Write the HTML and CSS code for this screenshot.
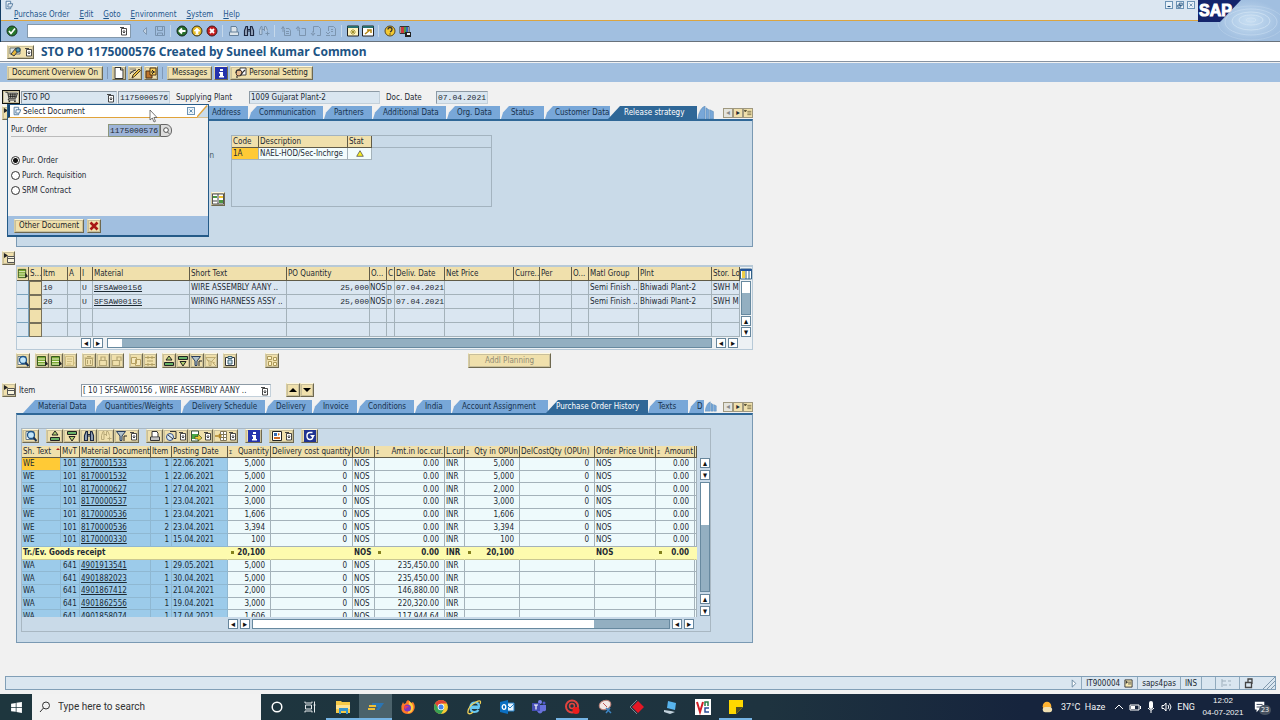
FILE: index.html
```html
<!DOCTYPE html>
<html lang="en">
<head>
<meta charset="utf-8">
<title>STO PO 1175000576 Created by Suneel Kumar Common</title>
<link rel="stylesheet" href="styles.css">
</head>
<body>
<svg class="defs" aria-hidden="true">
<symbol id="exit" viewBox="0 0 12 12"><path d="M8 4.500V1.500H2.500v9H8V9M5 4.500h5.500L9 8.500H4.500z" fill="#eef4fa" stroke="#456f96"/></symbol>
<symbol id="hist" viewBox="0 0 8 10"><path d="M1.500 2.500h5v6.500h-5z" fill="#fff" stroke="#333" stroke-width=".9"/><path d="M0 1.500h4M4 4v3M2.800 5.500L4 7l1.200-1.500" fill="none" stroke="#333" stroke-width=".9"/></symbol>
<symbol id="ok" viewBox="0 0 12 12"><circle cx="6" cy="6" r="5" fill="#26762c" stroke="#1c3623"/><path d="M3 6l2 2.500 4-5" fill="none" stroke="#fff" stroke-width="1.700"/></symbol>
<symbol id="back" viewBox="0 0 12 12"><circle cx="6" cy="6" r="5" fill="#27702c" stroke="#13251a"/><path d="M9.500 6H4M6 3.500L3.500 6 6 8.500" fill="none" stroke="#fff" stroke-width="1.900"/></symbol>
<symbol id="up" viewBox="0 0 12 12"><circle cx="6" cy="6" r="5" fill="#e7bd27" stroke="#39341c"/><path d="M3 6l3-3 3 3H7v2.500H5V6zM4 9.500h4" fill="#fff" stroke="#fff" stroke-width=".7"/></symbol>
<symbol id="cancel" viewBox="0 0 12 12"><circle cx="6" cy="6" r="5" fill="#c51e1e" stroke="#46191a"/><path d="M4 4l4 4M8 4L4 8" stroke="#fff" stroke-width="1.800"/></symbol>
<symbol id="save" viewBox="0 0 12 12"><path d="M1.500 1.500h9v9h-9zM3.500 1.500v4h5v-4M3.500 10.500V8h5v2.500" fill="none" stroke="#7893af"/></symbol>
<symbol id="tri" viewBox="0 0 12 12"><path d="M7.500 2.500L4 6l3.500 3.500z" fill="#c1d1e1" stroke="#8199b3"/></symbol>
<symbol id="print" viewBox="0 0 12 12"><path d="M3 7V1.500h5l1 2V7M1.500 7h9v3.500h-9z" fill="#dce4ea" stroke="#65809b"/></symbol>
<symbol id="print2" viewBox="0 0 12 12"><path d="M3 7V1.500h5l1 2V7M1.500 7h9v3.500h-9z" fill="#fff" stroke="#333"/><path d="M2 9h8" stroke="#888"/></symbol>
<symbol id="find" viewBox="0 0 12 12"><path d="M1.500 10.500v-5L3 1.500h1.500v9zM7.500 10.500v-9H9l1.500 4v5zM4.500 4.500h3M4.500 6h3" fill="#9cacc2" stroke="#1c2740" stroke-width="1.200"/></symbol>
<symbol id="findg" viewBox="0 0 12 12"><path d="M1.500 9.500v-4L3 1.500h1v8zM6.500 6V1.500H8l1.500 4M4 4.500h2.500M7.500 8.500h4M9.500 6.500v4" fill="none" stroke="#b9aa79"/></symbol>
<symbol id="findb" viewBox="0 0 12 12"><path d="M1.500 9.500v-4L3 1.500h1v8zM6.500 6V1.500H8l1.500 4M4 4.500h2.500M7.500 8.500h4M9.500 6.500v4" fill="#b9cce0" stroke="#7892ad"/></symbol>
<symbol id="pg1" viewBox="0 0 12 12"><path d="M4.500 4.500v6h6v-5L9 3.500H6M1.500 4L3 1.500 4.500 4M3 2v5M6 6.500h3M6 8.500h3" fill="none" stroke="#7890a9" stroke-width=".9"/></symbol>
<symbol id="pg2" viewBox="0 0 12 12"><path d="M4.500 4.500v6h6v-7h-4M1 4l2-2.500L5 4M3 2v4" fill="none" stroke="#7890a9" stroke-width=".9"/></symbol>
<symbol id="pg3" viewBox="0 0 12 12"><path d="M3.500 7V1.500h5l2 2v7H7M1 8l2 2.500L5 8M3 10V6" fill="none" stroke="#7890a9" stroke-width=".9"/></symbol>
<symbol id="pg4" viewBox="0 0 12 12"><path d="M3.500 6V1.500h5l2 2v7H6M1 7l2 2 2-2M1 10.500h4M6 4.500h2M6 6.500h2" fill="none" stroke="#7890a9" stroke-width=".9"/></symbol>
<symbol id="win" viewBox="0 0 12 12"><path d="M.5 1h11v10H.5z" fill="#fff4c0" stroke="#222"/><path d="M.5 2h11" stroke="#277071" stroke-width="2"/><path d="M6 4v6M3 7h6M4 5l4 4M8 5L4 9" stroke="#958622" stroke-width=".8"/></symbol>
<symbol id="link" viewBox="0 0 12 12"><path d="M.5 1h11v10H.5z" fill="#fff" stroke="#222"/><path d="M.5 2h11" stroke="#277071" stroke-width="2"/><path d="M3 9l5-4M5 5h4v3" fill="none" stroke="#b58713" stroke-width="1.500"/></symbol>
<symbol id="help" viewBox="0 0 12 12"><circle cx="6" cy="6" r="5" fill="#f4c932" stroke="#594820"/><path d="M4 4.500q0-2 2-2t2 2q0 1.500-2 2.500M6 8.500v1" fill="none" stroke="#313131" stroke-width="1.300"/></symbol>
<symbol id="layout" viewBox="0 0 12 12"><path d="M1 1.500h9v7H1z" fill="#fff" stroke="#333"/><path d="M2 2h3v6H2z" fill="#cb383d"/><path d="M5 2h2v6H5z" fill="#4b9d43"/><path d="M7 2h2v6H7z" fill="#3368be"/><path d="M6 7h6v5H6z" fill="#222"/><path d="M8 8h3v2H8z" fill="#eee"/></symbol>
<symbol id="dis" viewBox="0 0 12 12"><path d="M1 2h10v6H1z" fill="#dbe5e9" stroke="#6a7475"/><path d="M2 8l5-6 3 2-5 6z" fill="#e6b83a" stroke="#373b42"/><circle cx="9" cy="4" r="2.200" fill="#4a94ad" stroke="#263e51"/></symbol>
<symbol id="new" viewBox="0 0 12 12"><path d="M2 .5h6l2 2v9H2zM7.500 1v2H10" fill="#fff" stroke="#333"/></symbol>
<symbol id="edit" viewBox="0 0 12 12"><path d="M1 2h6M1 5h4" stroke="#777"/><path d="M3 11l1-3 6-6 1.500 1.500-6 6z" fill="#edc442" stroke="#46361f"/><path d="M1 7q2-4 6-4" fill="none" stroke="#333"/></symbol>
<symbol id="copy" viewBox="0 0 12 12"><path d="M1 4h6v7H1z" fill="#bd732c" stroke="#4d3217"/><path d="M5 1h6v7H5z" fill="#ffd35c" stroke="#4d3217"/><path d="M6 5h4M7 3l2 2-2 2" fill="none" stroke="#222"/></symbol>
<symbol id="info" viewBox="0 0 12 12"><path d="M0 0h12v12H0z" fill="#2433ad"/><path d="M5 2h3v2H5zM4 5h4v4h1v1.500H4V9h1V6.500H4z" fill="#fff"/></symbol>
<symbol id="person" viewBox="0 0 12 12"><path d="M5 1h6v7H5z" fill="#fff" stroke="#444"/><circle cx="4" cy="6" r="3" fill="#e8ba8c" stroke="#4c342c"/><path d="M1 6q0-4 4-3M2 9v2M5 9l3-4 2-2" fill="none" stroke="#333" stroke-width="1.200"/></symbol>
<symbol id="cart" viewBox="0 0 16 14"><path d="M1 1.500h2.500l1.500 7h8l2-6H4M4 4.500h10M5 6.500h8M7 3v5M9.500 3v5M12 3v5M5 8.500l-1 2h9" fill="none" stroke="#1b1b1b"/><circle cx="5.500" cy="12" r="1" fill="#222"/><circle cx="12" cy="12" r="1" fill="#222"/></symbol>
<symbol id="open" viewBox="0 0 12 12"><path d="M4.500 4.500v6h7v-6zM4.500 6.500h7" fill="#f9f5dd" stroke="#555"/><path d="M1 1l4 2.500L1 6z" fill="#222"/></symbol>
<symbol id="x" viewBox="0 0 12 12"><path d="M2.500 2.500l7 7M9.500 2.500l-7 7" stroke="#a81717" stroke-width="2.600"/></symbol>
<symbol id="grid" viewBox="0 0 12 12"><path d="M.5 1h11v10H.5z" fill="#fff" stroke="#555"/><path d="M1 3h4v2H1zM7 7h4v3H7z" fill="#4c9644"/><path d="M7 3h4v2H7z" fill="#edc02c"/><path d="M1 8h4M6 1v10" stroke="#444"/></symbol>
<symbol id="det" viewBox="0 0 12 12"><path d="M1 1.500h8v8H1z" fill="#fff" stroke="#697c87"/><circle cx="6" cy="5" r="3.500" fill="#c2e6fa" stroke="#1d5489" stroke-width="1.300"/><path d="M8.500 7.500l3 3.500" stroke="#1b3252" stroke-width="2"/></symbol>
<symbol id="sel" viewBox="0 0 12 12"><path d="M1.500 1.500h8v9h-8z" fill="#7aa832" stroke="#3a5b20"/><path d="M2 4h7M2 6.500h7M2 9h7" stroke="#edf5cf"/><path d="M9 5v6l3-2z" fill="#222"/></symbol>
<symbol id="dsel" viewBox="0 0 12 12"><path d="M1.500 1.500h8v9h-8zM3 4h5M3 6.500h5M3 9h4M9 8h3" fill="none" stroke="#cfbd80"/></symbol>
<symbol id="trash" viewBox="0 0 12 12"><path d="M2.500 3.500h7v7h-7zM1.500 3h9M4 1.500h4M4.500 5v4M7.500 5v4" fill="none" stroke="#b4a46f"/></symbol>
<symbol id="lock" viewBox="0 0 12 12"><path d="M2.500 5.500h7v5h-7zM4 5V2h4v3" fill="none" stroke="#b5a674" stroke-width="1.200"/></symbol>
<symbol id="unlock" viewBox="0 0 12 12"><path d="M1.500 5.500h7v5h-7zM6 5V2h4v4" fill="none" stroke="#b5a674" stroke-width="1.200"/></symbol>
<symbol id="cp2" viewBox="0 0 12 12"><path d="M1.500 2.500h5v6h-5zM5.500 4.500h5v6h-5z" fill="#f5e8bd" stroke="#b7a163"/></symbol>
<symbol id="rows" viewBox="0 0 12 12"><path d="M1 2.500h10M1 9.500h10M3 6h6M4 1v3M8 1v3M4 8v3M8 8v3" fill="none" stroke="#b19f64"/></symbol>
<symbol id="asc" viewBox="0 0 12 12"><path d="M6 1L3 5h6z" fill="#b1d272" stroke="#222"/><path d="M1.500 7.500h9v3h-9z" fill="#67b267" stroke="#222"/></symbol>
<symbol id="desc" viewBox="0 0 12 12"><path d="M1.500 1.500h9v3h-9z" fill="#67b267" stroke="#222"/><path d="M3 6.500h6L6 11z" fill="#b1d272" stroke="#222"/></symbol>
<symbol id="filter" viewBox="0 0 12 12"><path d="M.500 1.500h9L6 6v4.500H4V6z" fill="#afc0c9" stroke="#293d5c"/><path d="M8 6h3M8 6v5" stroke="#222"/></symbol>
<symbol id="filterg" viewBox="0 0 12 12"><path d="M.500 2.500h10L6 7v3.500H4V7zM8 8l3 3M2 5l8 3" fill="#e7dcb0" stroke="#bfac73"/></symbol>
<symbol id="clip" viewBox="0 0 12 12"><path d="M1.500 2.500h9v8h-9z" fill="#fff" stroke="#333"/><path d="M4 1.500h4v2H4zM4 5h4v4H4z" fill="#cce0ed" stroke="#3d6071"/></symbol>
<symbol id="cfg" viewBox="0 0 12 12"><path d="M1.500 1.500h4v3h-4zM7.500 2.500h3v3h-3zM2.500 6.500h3v4h-3zM7.500 7.500h3v3h-3z" fill="#fff4c8" stroke="#ad995a"/></symbol>
<symbol id="export" viewBox="0 0 12 12"><path d="M1.500 1h7v10h-7z" fill="#fff" stroke="#39543c"/><path d="M2 4h7v5H2z" fill="#49a745"/><path d="M5 6.500h3V4l4 4-4 3V9H5z" fill="#edcd38" stroke="#243d1e" stroke-width=".6"/></symbol>
<symbol id="view" viewBox="0 0 12 12"><circle cx="5" cy="7" r="3.500" fill="#dcecf8" stroke="#344e84"/><path d="M5 1.500h6v7H9M3 5l5 4" fill="none" stroke="#333"/></symbol>
<symbol id="cols" viewBox="0 0 12 12"><path d="M5.500 1.500h6v9h-6zM5.500 4.500h6M5.500 7.500h6M8.500 1.500v9" fill="#fff" stroke="#81785a"/><path d="M0 6h6M4 4l2 2-2 2" fill="none" stroke="#ae8428" stroke-width="1.400"/></symbol>
<symbol id="chart" viewBox="0 0 12 12"><path d="M1.500 1.500h9v9h-9z" fill="#fff" stroke="#222"/><path d="M3 3h3v3H3z" fill="#346ab6"/><path d="M7 3l2 1-2 2zM3 7h6v2H3z" fill="#cf6b28"/></symbol>
<symbol id="refresh" viewBox="0 0 12 12"><path d="M0 0h12v12H0z" fill="#203291"/><path d="M8.500 2.500H6Q3 2.500 3 6t3 3.500 3-3.500" fill="none" stroke="#fff" stroke-width="1.400"/><path d="M6 5h5L8.500 8z" fill="#fff"/></symbol>
<symbol id="tlist" viewBox="0 0 12 12"><path d="M5 3.500h6M5 6h6M5 8.500h6M0 2h4L2 4.500z" fill="#333" stroke="#5c532c"/></symbol>
<symbol id="entry" viewBox="0 0 10 10"><path d="M1 1h8v8H1z" fill="#f6e9b2" stroke="#333"/><path d="M4.500 3.500H8M4.500 5.500H8M2 2l2 1.500L2 5" stroke="#333" fill="#333" stroke-width=".8"/></symbol>
<symbol id="tstack" viewBox="0 0 18 14"><path d="M0 14Q2 2 8 0v14zM9 2l3 2v10H9zM13 4l4 2v8h-4z" fill="#78a7d8" stroke="#4a7fae" stroke-width=".5"/></symbol>
<symbol id="colcfg" viewBox="0 0 12 12"><path d="M.5 1h11v10H.5z" fill="#fff" stroke="#326085"/><path d="M.5 2h11" stroke="#24549a" stroke-width="2"/><path d="M2 3h3v7H2z" fill="#edce48"/><path d="M6 3v8M9 3v8" stroke="#326085"/></symbol>
</svg>

<header class="top">
  <div class="titlebar"><svg class="ic"><use href="#exit"/></svg></div>
  <nav class="menu"><a href="#"><u>P</u>urchase Order</a><a href="#"><u>E</u>dit</a><a href="#"><u>G</u>oto</a><a href="#"><u>E</u>nvironment</a><a href="#"><u>S</u>ystem</a><a href="#"><u>H</u>elp</a></nav>
  <div class="stdbar">
    <button class="flat" aria-label="Enter"><svg class="ic"><use href="#ok"/></svg></button>
    <span class="cmd"><input type="text" aria-label="Command"><svg class="hist"><use href="#hist"/></svg></span>
    <div class="icons i1"><button class="flat" aria-label="Collapse"><svg class="ic"><use href="#tri"/></svg></button><button class="flat" aria-label="Save"><svg class="ic"><use href="#save"/></svg></button></div>
    <div class="icons"><button class="flat" aria-label="Back"><svg class="ic"><use href="#back"/></svg></button><button class="flat" aria-label="Exit"><svg class="ic"><use href="#up"/></svg></button><button class="flat" aria-label="Cancel"><svg class="ic"><use href="#cancel"/></svg></button></div>
    <div class="icons"><button class="flat" aria-label="Print"><svg class="ic"><use href="#print"/></svg></button><button class="flat" aria-label="Find"><svg class="ic"><use href="#find"/></svg></button><button class="flat" aria-label="Find next"><svg class="ic"><use href="#findb"/></svg></button></div>
    <div class="icons"><button class="flat" aria-label="First page"><svg class="ic"><use href="#pg1"/></svg></button><button class="flat" aria-label="Previous page"><svg class="ic"><use href="#pg2"/></svg></button><button class="flat" aria-label="Next page"><svg class="ic"><use href="#pg3"/></svg></button><button class="flat" aria-label="Last page"><svg class="ic"><use href="#pg4"/></svg></button></div>
    <div class="icons"><button class="flat" aria-label="New session"><svg class="ic"><use href="#win"/></svg></button><button class="flat" aria-label="Shortcut"><svg class="ic"><use href="#link"/></svg></button></div>
    <div class="icons"><button class="flat" aria-label="Help"><svg class="ic"><use href="#help"/></svg></button><button class="flat" aria-label="Local layout"><svg class="ic"><use href="#layout"/></svg></button></div>
  </div>
  <div class="wctl"><button aria-label="Minimise"><svg viewBox="0 0 8 8"><path d="M2 6h4" stroke="#1f4b77" stroke-width="1.500"/></svg></button><button aria-label="Restore"><svg viewBox="0 0 8 8"><path d="M3 1.500h4v3H3zM1 4h4v3H1z" fill="#cfe0ee" stroke="#1f4b77"/></svg></button><button aria-label="Close"><svg viewBox="0 0 8 8"><path d="M2 2l4 4M6 2L2 6" stroke="#547da2"/></svg></button></div>
  <svg class="logo" viewBox="0 0 82 41" role="img" aria-label="SAP"><defs><radialGradient id="water"><stop offset="0" stop-color="#c8dff3"/><stop offset="1" stop-color="#a1bfe0"/></radialGradient></defs><path d="M20 22L42 0h40v41H20z" fill="url(#water)"/><g fill="none" stroke="#cfe2f3"><ellipse cx="53" cy="20" rx="5" ry="2"/><ellipse cx="53" cy="20" rx="12" ry="5"/><ellipse cx="53" cy="21" rx="19" ry="9" opacity=".8"/><ellipse cx="53" cy="22" rx="26" ry="13" opacity=".5"/><ellipse cx="53" cy="23" rx="33" ry="17" opacity=".3"/></g><path d="M0 0h43L22 22H0z" fill="#14246b"/><text x="1" y="16" class="saptext">SAP</text></svg>
</header>

<div class="heading"><button class="btn split" aria-label="Display or change"><svg class="ic"><use href="#dis"/></svg><svg class="hist"><use href="#hist"/></svg></button><h1>STO PO 1175000576 Created by Suneel Kumar Common</h1></div>

<div class="appbar">
  <button class="btn">Document Overview On</button><i class="sep"></i>
  <button class="btn sq" aria-label="Create"><svg class="ic"><use href="#new"/></svg></button><button class="btn sq" aria-label="Change"><svg class="ic"><use href="#edit"/></svg></button><button class="btn sq" aria-label="Other document"><svg class="ic"><use href="#copy"/></svg></button><i class="sep"></i>
  <button class="btn">Messages</button><button class="btn sq" aria-label="Help"><svg class="ic"><use href="#info"/></svg></button><button class="btn"><svg class="ic"><use href="#person"/></svg>Personal Setting</button>
</div>

<main>
  <form class="docrow">
    <button type="button" class="btn cart" aria-label="Cart"><svg><use href="#cart"/></svg></button>
    <span class="pick type"><select aria-label="Document type"><option>STO PO</option></select><svg class="hist"><use href="#hist"/></svg></span>
    <input class="mono num" type="text" value="1175000576" aria-label="Document number">
    <label for="plant">Supplying Plant</label><input id="plant" class="plant" type="text" value="1009 Gujarat Plant-2">
    <label for="date">Doc. Date</label><input id="date" class="mono date" type="text" value="07.04.2021">
  </form>

  <section class="sect head">
    <button class="btn sq" aria-label="Collapse header"><svg class="ic"><use href="#open"/></svg></button>
    <div class="pane">
      <div class="tabs t1"><button>Texts</button><button>Address</button><button>Communication</button><button>Partners</button><button>Additional Data</button><button>Org. Data</button><button>Status</button><button>Customer Data</button><button class="on">Release strategy</button><svg class="stack"><use href="#tstack"/></svg><div class="tnav"><button aria-label="Tabs left" class="off">◂</button><button aria-label="Tabs right">▸</button><button aria-label="Tab list"><svg><use href="#tlist"/></svg></button></div></div>
      <div class="panel p1">
        <div class="rel"><span>Release Indication</span><button class="btn sq" aria-label="Release options"><svg class="ic"><use href="#grid"/></svg></button></div>
        <div class="relbox"><div class="relhead"></div><table class="reltab"><colgroup><col class="c27"><col class="c89"><col class="c24"></colgroup><tr><th>Code</th><th>Description</th><th>Stat</th></tr><tr><td class="hot">1A</td><td>NAEL-HOD/Sec-Inchrge</td><td class="mid"><svg class="warn" viewBox="0 0 8 7"><path d="M4 .7L7.300 6.300H.7z" fill="#f8ee20" stroke="#555" stroke-width=".8"/></svg></td></tr></table></div>
      </div>
    </div>
  </section>

  <section class="sect items">
    <button class="btn sq" aria-label="Collapse items"><svg class="ic"><use href="#open"/></svg></button>
    <div class="pane itempane">
      <div class="itembox">
        <table class="itab"><colgroup><col class="c12"><col class="c13"><col class="c26"><col class="c13"><col class="c12"><col class="c97"><col class="c97"><col class="c83"><col class="c17"><col class="c8"><col class="c50"><col class="c69"><col class="c26"><col class="c32"><col class="c17"><col class="c50"><col class="c73"><col class="c28"></colgroup>
        <thead><tr><th class="selh"><svg class="ic"><use href="#sel"/></svg></th><th>S...</th><th>Itm</th><th>A</th><th>I</th><th>Material</th><th>Short Text</th><th>PO Quantity</th><th>O...</th><th>C</th><th>Deliv. Date</th><th>Net Price</th><th>Curre...</th><th>Per</th><th>O...</th><th>Matl Group</th><th>Plnt</th><th>Stor. Lo</th></tr></thead>
        <tbody>
        <tr><td></td><td class="rs"></td><td class="mono">10</td><td></td><td class="mono">U</td><td class="mono"><a href="#">SFSAW00156</a></td><td>WIRE ASSEMBLY AANY ..</td><td class="mono r">25,000</td><td>NOS</td><td class="mono">D</td><td class="mono">07.04.2021</td><td></td><td></td><td></td><td></td><td>Semi Finish ..</td><td>Bhiwadi Plant-2</td><td>SWH M</td></tr>
        <tr><td></td><td class="rs"></td><td class="mono">20</td><td></td><td class="mono">U</td><td class="mono"><a href="#">SFSAW00155</a></td><td>WIRING HARNESS ASSY ..</td><td class="mono r">25,000</td><td>NOS</td><td class="mono">D</td><td class="mono">07.04.2021</td><td></td><td></td><td></td><td></td><td>Semi Finish ..</td><td>Bhiwadi Plant-2</td><td>SWH M</td></tr>
        <tr><td></td><td class="rs"></td><td></td><td></td><td></td><td></td><td></td><td></td><td></td><td></td><td></td><td></td><td></td><td></td><td></td><td></td><td></td><td></td></tr>
        <tr><td></td><td class="rs"></td><td></td><td></td><td></td><td></td><td></td><td></td><td></td><td></td><td></td><td></td><td></td><td></td><td></td><td></td><td></td><td></td></tr>
        </tbody></table>
        <div class="vs"><button class="colbtn" aria-label="Configure columns"><svg class="ic"><use href="#colcfg"/></svg></button><div class="track"><i></i></div><button class="ar" aria-label="Up">▴</button><button class="ar" aria-label="Down">▾</button></div>
        <div class="hs h1"><button class="ar" aria-label="Left">◂</button><button class="ar" aria-label="Right">▸</button><div class="track"><i></i></div><button class="ar" aria-label="Left">◂</button><button class="ar" aria-label="Right">▸</button></div>
      </div>
      <div class="tools it">
        <div><button class="btn sq" aria-label="Details"><svg class="ic"><use href="#det"/></svg></button></div>
        <div><button class="btn sq" aria-label="Select all"><svg class="ic"><use href="#sel"/></svg></button><button class="btn sq" aria-label="Select block"><svg class="ic"><use href="#sel"/></svg></button><button class="btn sq" aria-label="Deselect"><svg class="ic"><use href="#dsel"/></svg></button></div>
        <div><button class="btn sq" aria-label="Delete"><svg class="ic"><use href="#trash"/></svg></button><button class="btn sq" aria-label="Lock"><svg class="ic"><use href="#lock"/></svg></button><button class="btn sq" aria-label="Unlock"><svg class="ic"><use href="#unlock"/></svg></button></div>
        <div><button class="btn sq" aria-label="Copy"><svg class="ic"><use href="#cp2"/></svg></button><button class="btn sq" aria-label="Duplicate"><svg class="ic"><use href="#rows"/></svg></button></div>
        <div><button class="btn sq" aria-label="Sort ascending"><svg class="ic"><use href="#asc"/></svg></button><button class="btn sq" aria-label="Sort descending"><svg class="ic"><use href="#desc"/></svg></button><button class="btn sq" aria-label="Filter"><svg class="ic"><use href="#filter"/></svg></button><button class="btn sq" aria-label="Clear filter"><svg class="ic"><use href="#filterg"/></svg></button></div>
        <div><button class="btn sq" aria-label="Clipboard"><svg class="ic"><use href="#clip"/></svg></button></div>
        <div class="far"><button class="btn sq" aria-label="Configuration"><svg class="ic"><use href="#cfg"/></svg></button></div>
        <button class="btn addl" disabled>Addl Planning</button>
      </div>
    </div>
  </section>

  <div class="itemrow"><button class="btn sq" aria-label="Collapse item detail"><svg class="ic"><use href="#open"/></svg></button><label for="item">Item</label><span class="pick item"><select id="item"><option>[ 10 ] SFSAW00156 , WIRE ASSEMBLY AANY ..</option></select><svg class="hist"><use href="#hist"/></svg></span><button class="btn sq" aria-label="Previous item"><svg class="ic" viewBox="0 0 12 12"><path d="M2 8h8L6 4z"/></svg></button><button class="btn sq" aria-label="Next item"><svg class="ic" viewBox="0 0 12 12"><path d="M2 4h8L6 8z"/></svg></button></div>

  <section class="pane detail">
    <div class="tabs t2"><button>Material Data</button><button>Quantities/Weights</button><button>Delivery Schedule</button><button>Delivery</button><button>Invoice</button><button>Conditions</button><button>India</button><button>Account Assignment</button><button class="on">Purchase Order History</button><button>Texts</button><button class="cutoff">D</button><svg class="stack"><use href="#tstack"/></svg><div class="tnav"><button aria-label="Tabs left" class="off">◂</button><button aria-label="Tabs right">▸</button><button aria-label="Tab list"><svg><use href="#tlist"/></svg></button></div></div>
    <div class="panel p2"><div class="alv">
      <div class="tools at">
        <div><button class="btn sq" aria-label="Details"><svg class="ic"><use href="#det"/></svg></button></div>
        <div><button class="btn sq" aria-label="Sort ascending"><svg class="ic"><use href="#asc"/></svg></button><button class="btn sq" aria-label="Sort descending"><svg class="ic"><use href="#desc"/></svg></button><button class="btn sq" aria-label="Find"><svg class="ic"><use href="#find"/></svg></button><button class="btn sq" aria-label="Find next"><svg class="ic"><use href="#findg"/></svg></button><button class="btn split" aria-label="Filter"><svg class="ic"><use href="#filter"/></svg><svg class="hist"><use href="#hist"/></svg></button></div>
        <div><button class="btn sq" aria-label="Print"><svg class="ic"><use href="#print2"/></svg></button><button class="btn split" aria-label="Views"><svg class="ic"><use href="#view"/></svg><svg class="hist"><use href="#hist"/></svg></button><button class="btn split" aria-label="Export"><svg class="ic"><use href="#export"/></svg><svg class="hist"><use href="#hist"/></svg></button><button class="btn split" aria-label="Layout"><svg class="ic"><use href="#cols"/></svg><svg class="hist"><use href="#hist"/></svg></button></div>
        <div><button class="btn sq" aria-label="Information"><svg class="ic"><use href="#info"/></svg></button></div>
        <div><button class="btn split" aria-label="Graphic"><svg class="ic"><use href="#chart"/></svg><svg class="hist"><use href="#hist"/></svg></button></div>
        <div><button class="btn sq" aria-label="Refresh"><svg class="ic"><use href="#refresh"/></svg></button></div>
      </div>
      <div class="alvbody">
        <div class="clip"><table class="hist-tab"><colgroup><col class="c39"><col class="c19"><col class="c71"><col class="c21"><col class="c56"><col class="c43"><col class="c82"><col class="c22"><col class="c70"><col class="c20"><col class="c55"><col class="c75"><col class="c61"><col class="c39"><col class="c2"></colgroup>
        <thead><tr><th>Sh. Text<svg class="sorted" viewBox="0 0 4 4"><path d="M0 3l2-2 2 2z" fill="#a22"/></svg></th><th>MvT</th><th>Material Document</th><th>Item</th><th>Posting Date</th><th><i>Σ</i>Quantity</th><th>Delivery cost quantity</th><th>OUn</th><th><i>Σ</i>Amt.in loc.cur.</th><th>L.cur</th><th><i>Σ</i>Qty in OPUn</th><th>DelCostQty (OPUn)</th><th>Order Price Unit</th><th><i>Σ</i>Amount</th><th></th></tr></thead>
        <tbody>
        <tr><td class="hot">WE</td><td>101</td><td><a href="#">8170001533</a></td><td>1</td><td>22.06.2021</td><td>5,000</td><td>0</td><td>NOS</td><td>0.00</td><td>INR</td><td>5,000</td><td>0</td><td>NOS</td><td>0.00</td><td></td></tr>
        <tr><td>WE</td><td>101</td><td><a href="#">8170001532</a></td><td>1</td><td>22.06.2021</td><td>5,000</td><td>0</td><td>NOS</td><td>0.00</td><td>INR</td><td>5,000</td><td>0</td><td>NOS</td><td>0.00</td><td></td></tr>
        <tr><td>WE</td><td>101</td><td><a href="#">8170000627</a></td><td>1</td><td>27.04.2021</td><td>2,000</td><td>0</td><td>NOS</td><td>0.00</td><td>INR</td><td>2,000</td><td>0</td><td>NOS</td><td>0.00</td><td></td></tr>
        <tr><td>WE</td><td>101</td><td><a href="#">8170000537</a></td><td>1</td><td>23.04.2021</td><td>3,000</td><td>0</td><td>NOS</td><td>0.00</td><td>INR</td><td>3,000</td><td>0</td><td>NOS</td><td>0.00</td><td></td></tr>
        <tr><td>WE</td><td>101</td><td><a href="#">8170000536</a></td><td>1</td><td>23.04.2021</td><td>1,606</td><td>0</td><td>NOS</td><td>0.00</td><td>INR</td><td>1,606</td><td>0</td><td>NOS</td><td>0.00</td><td></td></tr>
        <tr><td>WE</td><td>101</td><td><a href="#">8170000536</a></td><td>2</td><td>23.04.2021</td><td>3,394</td><td>0</td><td>NOS</td><td>0.00</td><td>INR</td><td>3,394</td><td>0</td><td>NOS</td><td>0.00</td><td></td></tr>
        <tr><td>WE</td><td>101</td><td><a href="#">8170000330</a></td><td>1</td><td>15.04.2021</td><td>100</td><td>0</td><td>NOS</td><td>0.00</td><td>INR</td><td>100</td><td>0</td><td>NOS</td><td>0.00</td><td></td></tr>
        <tr class="sum"><td colspan="5">Tr./Ev. Goods receipt</td><td class="r"><i></i>20,100</td><td></td><td>NOS</td><td class="r"><i></i>0.00</td><td>INR</td><td class="r"><i></i>20,100</td><td></td><td>NOS</td><td class="r"><i></i>0.00</td><td></td></tr>
        <tr><td>WA</td><td>641</td><td><a href="#">4901913541</a></td><td>1</td><td>29.05.2021</td><td>5,000</td><td>0</td><td>NOS</td><td>235,450.00</td><td>INR</td><td></td><td></td><td></td><td></td><td></td></tr>
        <tr><td>WA</td><td>641</td><td><a href="#">4901882023</a></td><td>1</td><td>30.04.2021</td><td>5,000</td><td>0</td><td>NOS</td><td>235,450.00</td><td>INR</td><td></td><td></td><td></td><td></td><td></td></tr>
        <tr><td>WA</td><td>641</td><td><a href="#">4901867412</a></td><td>1</td><td>21.04.2021</td><td>2,000</td><td>0</td><td>NOS</td><td>146,880.00</td><td>INR</td><td></td><td></td><td></td><td></td><td></td></tr>
        <tr><td>WA</td><td>641</td><td><a href="#">4901862556</a></td><td>1</td><td>19.04.2021</td><td>3,000</td><td>0</td><td>NOS</td><td>220,320.00</td><td>INR</td><td></td><td></td><td></td><td></td><td></td></tr>
        <tr><td>WA</td><td>641</td><td><a href="#">4901858074</a></td><td>1</td><td>17.04.2021</td><td>1,606</td><td>0</td><td>NOS</td><td>117,944.64</td><td>INR</td><td></td><td></td><td></td><td></td><td></td></tr>
        </tbody></table></div>
        <div class="vs v2"><button class="ar" aria-label="Up">▴</button><button class="ar" aria-label="Down">▾</button><div class="track"><i></i></div><button class="ar" aria-label="Up">▴</button><button class="ar" aria-label="Down">▾</button></div>
      </div>
      <div class="hs h2"><button class="ar" aria-label="Left">◂</button><button class="ar" aria-label="Right">▸</button><div class="track"><i></i></div><button class="ar" aria-label="Left">◂</button><button class="ar" aria-label="Right">▸</button></div>
    </div></div>
  </section>
</main>

<div class="status"><div class="msg"></div><svg class="sarrow" viewBox="0 0 6 10"><path d="M1 1l4 4-4 4z" fill="#fff" stroke="#66859d"/></svg><span>IT900004 <svg class="entry"><use href="#entry"/></svg></span><span>saps4pas</span><span>INS</span><span class="s14"></span><span class="s24"><svg class="ic" viewBox="0 0 12 12"><path d="M2 2v8M2 4h4M8 4h3M3 8h4M9 8h2" stroke="#9daebb"/></svg></span><span class="s24"><svg class="ic" viewBox="0 0 12 12"><path d="M1.500 5.500h6v5h-6zM4 5V2h4v5" fill="none" stroke="#444" stroke-width="1.300"/></svg></span><svg class="ic" viewBox="0 0 12 12"><path d="M0 12L12 0M4 12l8-8M8 12l4-4" stroke="#8199ac"/></svg></div>

<footer class="taskbar">
  <button class="start" aria-label="Start"><svg viewBox="0 0 12 12"><path d="M1 2.500l4.300-.7v3.700H1zM6 1.600L11 1v4.500H6zM1 6.300h4.300V10L1 9.400zM6 6.300h5V11l-5-.8z" fill="#fff"/></svg></button>
  <label class="search"><svg viewBox="0 0 12 12"><circle cx="7" cy="4.500" r="3.500" fill="none" stroke="#333"/><path d="M4.500 7L1 11" stroke="#333"/></svg><input type="text" placeholder="Type here to search" aria-label="Search"></label>
  <div class="apps">
    <button aria-label="Cortana"><svg viewBox="0 0 16 16"><circle cx="8" cy="8" r="4.800" fill="none" stroke="#fff" stroke-width="1.500"/></svg></button>
    <button aria-label="Task view"><svg viewBox="0 0 16 16"><path d="M3.500 6h6v4h-6zM3 2.500v1.500h7V2.500M3 13.500V12h7v1.500M12.500 2.500v11M11.500 6h2" fill="none" stroke="#e8ecee"/></svg></button>
    <button class="run" aria-label="File Explorer"><svg viewBox="0 0 16 16"><path d="M1 2h5l1 1h8v11H1z" fill="#f5c947"/><path d="M1 6h14v4H1z" fill="#ffe391"/><path d="M4 15V9h9v6h-2v-3H6v3z" fill="#3795cf"/></svg></button>
    <button class="cur" aria-label="SAP Logon"><svg viewBox="0 0 16 16"><path d="M4 4h12l-5 7H8l2-3H4z" fill="#2b75b4"/><path d="M1 6h7v2H1zM0 9h7v2H0z" fill="#efbf36"/></svg></button>
    <button aria-label="Firefox"><svg viewBox="0 0 16 16"><path d="M8 1q2 1 3 3l2-1q3 4 1 8t-6 4q-5 0-6.500-4Q.5 7 3 3l1 2 2-1q0-2 2-3z" fill="#ff7928"/><path d="M9 2q5 3 4 8-1 4-5 4" fill="#ffd03d"/><circle cx="7.500" cy="9" r="3.500" fill="#7b37c2"/><path d="M4 7q3-1 5 1-3 0-3 2-2 0-2-3z" fill="#ef3c59"/></svg></button>
    <button aria-label="Chrome"><svg viewBox="0 0 16 16"><circle cx="8" cy="8" r="7" fill="#f8cb34"/><path d="M2 4.500A7 7 0 0 1 14 4.500H8L5 9z" fill="#df4335"/><path d="M2 4.500A7 7 0 0 0 8 15l3-5H6z" fill="#38a254"/><circle cx="8" cy="8" r="3.300" fill="#fff"/><circle cx="8" cy="8" r="2.500" fill="#4284ed"/></svg></button>
    <button aria-label="Internet Explorer"><svg viewBox="0 0 16 16"><path d="M13.500 9H4.500q0 4 4 4 2.500 0 4-2M4.500 7.500q.5-4 4.500-4t4 4z" fill="none" stroke="#68c8f1" stroke-width="2.200"/><path d="M14 5q2-5-4-2Q1 8 2 14q2 2 5-1" fill="none" stroke="#efcf56" stroke-width="1.300"/></svg></button>
    <button aria-label="Outlook"><svg viewBox="0 0 16 16"><path d="M7 4h8v8H7z" fill="#e8f2fb" stroke="#2684cc"/><path d="M9 7l2 2 4-4" fill="none" stroke="#2684cc"/><path d="M1 3l8-2v14l-8-2z" fill="#0b6fc2"/><ellipse cx="5" cy="8" rx="1.800" ry="2.300" fill="none" stroke="#fff" stroke-width="1.300"/></svg></button>
    <button aria-label="Teams"><svg viewBox="0 0 16 16"><circle cx="9" cy="3" r="2" fill="#7b83eb"/><circle cx="13" cy="4" r="1.500" fill="#5059c9"/><path d="M6 6h6v6q-3 5-6 0zM12 6h3v5q-1 2-3 1z" fill="#6871dc"/><path d="M1 4h8v8H1z" fill="#454db5"/><path d="M3 6h4M5 6v4.500" stroke="#fff" stroke-width="1.200"/></svg></button>
    <button class="run" aria-label="Recorder"><svg viewBox="0 0 16 16"><circle cx="8" cy="7.500" r="6" fill="none" stroke="#e0443e" stroke-width="2"/><circle cx="8" cy="7" r="2.500" fill="none" stroke="#e0443e" stroke-width="1.500"/><circle cx="12" cy="11.500" r="3.500" fill="#ed1d1d"/></svg></button>
    <button aria-label="Snipping Tool"><svg viewBox="0 0 16 16"><ellipse cx="8" cy="6" rx="6" ry="4.500" transform="rotate(-20 8 6)" fill="#f3e8e5" stroke="#b88078"/><path d="M6 4l4 4" stroke="#c25656"/><path d="M9 9l5 5M13 9l-4 5" stroke="#3e86c4" stroke-width="1.500"/></svg></button>
    <button aria-label="Recorder tool"><svg viewBox="0 0 16 16"><path d="M8 1L1 8l7 7" fill="none" stroke="#798992"/><path d="M9 2l6 6-6 6-6-6z" fill="#e51725"/></svg></button>
    <button aria-label="Remote desktop"><svg viewBox="0 0 16 16"><path d="M6 2l8 2-1 7-8-2z" fill="#58b4ed"/><path d="M2 11l7 1 4 1-5 2-6-2z" fill="#c3d2dc"/></svg></button>
    <button aria-label="VNC"><svg viewBox="0 0 16 16"><path d="M0 0h16v16H0z" fill="#fff"/><path d="M2 3l3 10L8 3" fill="none" stroke="#d22027" stroke-width="2"/><path d="M10 7V3h3v4" fill="none" stroke="#268045" stroke-width="1.500"/><path d="M14 9h-4v4h4" fill="none" stroke="#2c519c" stroke-width="1.500"/></svg></button>
    <button class="run" aria-label="Sticky Notes"><svg viewBox="0 0 16 16"><path d="M1 1h14v14H1z" fill="#ffd800"/><path d="M8 15l7-7v7z" fill="#1e333f"/><path d="M8 15V8h7z" fill="#4f4d25"/></svg></button>
  </div>
  <div class="tray">
    <svg viewBox="0 0 14 14"><circle cx="7" cy="6" r="5" fill="#ffb331"/><rect x="2" y="7" width="11" height="6" rx="3" fill="#f0dfb1"/></svg><span class="temp">37°C&nbsp; Haze</span>
    <svg viewBox="0 0 12 12"><path d="M2 8l4-4 4 4" fill="none" stroke="#fff"/></svg><svg viewBox="0 0 12 12"><path d="M1 4h9v5H1z" fill="none" stroke="#fff"/><path d="M2 5h4v3H2zM11 5h1v3h-1z" fill="#fff"/></svg><svg viewBox="0 0 12 12"><rect x="4" y="0" width="4" height="8" rx="2" fill="#fff"/><path d="M3 7q3 4 6 0M6 9v3" fill="none" stroke="#fff"/></svg><svg viewBox="0 0 12 12"><path d="M1 4.500h2L5 2v8L3 7.500H1zM7 4q1.500 2 0 4M8.500 2.500q3 3.500 0 7" fill="none" stroke="#fff"/></svg><span>ENG</span>
    <div class="clock"><span>12:02</span><span>04-07-2021</span></div>
    <div class="note"><svg viewBox="0 0 14 14"><path d="M1 1h11v9H6l-3 3v-3H1z" fill="#fff"/><path d="M3 4h7M3 7h6" stroke="#26324b"/></svg><b>23</b></div>
  </div>
</footer>

<div class="dialog" role="dialog" aria-label="Select Document">
  <div class="dtitle"><svg class="ic"><use href="#exit"/></svg><span>Select Document</span><button class="dclose" aria-label="Close"><svg viewBox="0 0 8 8"><path d="M2 2l4 4M6 2L2 6" stroke="#376d9a"/></svg></button><svg class="cut" viewBox="0 0 12 13"><path d="M0 13L11 0h1v13z" fill="#cbdcea"/><path d="M0 12.500L11 0" stroke="#e1a33a" stroke-width="1.500"/></svg></div>
  <div class="dbody">
    <div class="dfield"><label for="po">Pur. Order</label><input id="po" class="mono" type="text" value="1175000576"><button class="srch" aria-label="Search help"><svg viewBox="0 0 12 12"><circle cx="6" cy="5.500" r="2.800" fill="#fff" stroke="#333"/><path d="M8 8l2 2" stroke="#333"/></svg></button></div>
    <label class="radio"><input type="radio" name="kind" checked>Pur. Order</label>
    <label class="radio"><input type="radio" name="kind">Purch. Requisition</label>
    <label class="radio"><input type="radio" name="kind">SRM Contract</label>
  </div>
  <div class="dfoot"><button class="btn">Other Document</button><button class="btn sq" aria-label="Cancel"><svg class="ic"><use href="#x"/></svg></button></div>
  <svg class="cursor" viewBox="0 0 9 14"><path d="M1 1v10l2.300-2 1.700 4 1.500-.7-1.600-3.800H8z" fill="#fff" stroke="#555" stroke-width=".8"/></svg>
</div>
</body>
</html>
```

FILE: styles.css
```css
* { box-sizing: border-box; }
body { margin: 0; min-height: 100vh; display: flex; flex-direction: column; background: #f1f1f1; color: #1d2a33; font: 8px/11px "DejaVu Sans Condensed", "Noto Sans", sans-serif; position: relative; overflow-x: hidden; }
button, input, select { font: inherit; color: inherit; margin: 0; padding: 0; border-radius: 0; }
button { white-space: nowrap; }
svg { display: block; flex: none; }
.defs { position: absolute; width: 0; height: 0; }
.ic { width: 12px; height: 12px; }
.hist { width: 8px; height: 10px; }
.mono { font-family: "Liberation Mono", monospace; font-size: 8px; }
.r { text-align: right; }

.top { position: relative; background: #dbe6f1; border-left: 1px solid #123c63; }
.titlebar { height: 10px; padding-left: 3px; }
.titlebar .ic { width: 10px; height: 10px; }
.menu { display: flex; gap: 10px; height: 11px; padding-left: 13px; line-height: 10px; border-bottom: 1px solid #dba440; }
.menu a { color: #1f568c; text-decoration: none; }
.stdbar { display: flex; align-items: center; height: 21px; background: #a1bfe0; border-bottom: 1px solid #68727c; padding-left: 5px; }
.flat { border: 0; background: none; }
.cmd { position: relative; width: 104px; margin-left: 9px; }
.cmd input { display: block; width: 100%; height: 14px; border: 1px solid #8499ac; background: #fff; }
.cmd .hist { position: absolute; right: 3px; top: 2px; }
.icons { display: flex; gap: 3px; padding: 0 4px; border-left: 1px solid #c5d8ea; }
.icons + .icons { padding-left: 5px; }
.icons.i1 { border: 0; padding-left: 8px; }
.wctl { position: absolute; right: 85px; top: 1px; display: flex; gap: 3px; }
.wctl button { width: 8px; height: 8px; border: 1px solid #6c93b5; background: #e9f2f9; }
.wctl svg { width: 6px; height: 6px; }
.logo { position: absolute; right: 0; top: 0; width: 82px; height: 41px; }
.saptext { font: bold 16px "Liberation Sans", sans-serif; fill: #fff; stroke: #fff; stroke-width: 1px; }

.heading { display: flex; align-items: center; gap: 7px; height: 20px; padding-left: 7px; background: #fff; border-bottom: 1px solid #8792a0; }
.heading h1 { margin: 0; font: bold 12px/18px "Noto Sans", sans-serif; color: #1d5484; }
.appbar { display: flex; align-items: center; gap: 2px; height: 19px; margin-top: 1px; padding-left: 7px; background: #a1bfe0; }
.appbar .btn, .dfoot .btn { padding: 0 4px; gap: 2px; }
.appbar .sq, .dfoot .sq { padding: 0; }
.sep { width: 1px; height: 12px; margin: 0 2px; background: #8099b8; }

.btn { display: flex; align-items: center; justify-content: center; gap: 4px; height: 14px; padding: 0 5px; border: 1px solid; border-color: #fff8dc #6e684f #6e684f #d8cda1; background: #f0e0ac; box-shadow: 0 0 0 1px #c9bf9b inset; color: #202428; }
.btn.sq { width: 14px; padding: 0; }
.btn.split { width: 27px; padding: 0 1px; }
.btn:disabled { color: #918b74; }

main { width: 753px; max-width: 100%; padding: 8px 0 0 2px; }
.docrow { display: flex; align-items: center; height: 14px; }
.docrow .cart { width: 18px; padding: 0; background: #e8e4d6; border-color: #111; }
.cart svg { width: 15px; height: 12px; }
.pick { position: relative; }
.pick .hist { position: absolute; right: 2px; top: 2px; }
.docrow input, .pick select { appearance: none; display: block; width: 100%; height: 13px; padding: 0 1px; border: 1px solid; border-color: #8d9aa5 #c3d0da #c3d0da #8d9aa5; background: #dae6f0; }
.type { width: 96px; margin: 0 1px; }
.docrow .num, .docrow .date { width: 52px; }
.docrow label { width: 73px; margin-left: 6px; }
.docrow .plant { width: 131px; }
.docrow label[for="date"] { width: 50px; }

.sect { display: grid; grid-template-columns: 14px 1fr; align-items: start; }
.sect > .btn { width: 13px; }
.head { margin-top: 2px; }
.tabs { display: grid; align-items: stretch; height: 13px; line-height: 12px; }
.t1 { grid-template-columns: 170px 63px 75px 49px 74px 54px 44px 66px 86px 20px 1fr; }
.t2 { grid-template-columns: 79px 87px 84px 47px 45px 57px 37px 97px 99px 41px 16px 12px 1fr; padding: 0; }
.tabs > button { border: 0; text-align: left; padding-left: 10px; background: #78a7d8; clip-path: polygon(0 100%, 2px 50%, 8px 0, calc(100% - 1px) 0, calc(100% - 1px) 100%); color: #17324d; overflow: hidden; }
.t1 > button:nth-child(2) { padding-left: 26px; }
.t2 > button:first-child { margin-left: 7px; padding-left: 15px; clip-path: polygon(0 100%, 12px 0, 100% 0, 100% 100%); }
.tabs > .on { background: #2f6797; color: #fff; padding-left: 16px; margin-left: -3px; clip-path: polygon(0 100%, 12px 0, 100% 0, 100% 100%); }
.t2 > .on { padding-left: 10px; }
.t2 > .cutoff { padding-left: 8px; }
.stack { width: 18px; height: 13px; }
.t2 .stack { width: 12px; }
.tnav { display: flex; justify-content: flex-end; align-items: center; }
.tnav button { width: 10px; height: 10px; border: 1px solid #9f987f; background: #f0e0ac; line-height: 8px; }
.tnav .off { color: #888; background: #e4e4dd; }
.tnav svg { width: 8px; height: 8px; }
.panel { background: #c9dae8; border: 1px solid #7a99b3; border-top: 2px solid #2f6797; }
.p1 { display: grid; grid-template-columns: 208px 261px; gap: 6px; height: 128px; padding-top: 14px; }
.rel { display: flex; flex-direction: column; align-items: flex-end; gap: 31px; padding-top: 15px; }
.rel span { padding-right: 11px; color: #435662; }
.relbox { position: relative; height: 72px; border: 1px solid #a3b3bf; }
.relhead { position: absolute; inset: 0 0 auto 0; height: 12px; border-bottom: 1px solid #a3b3bf; }
table { border-collapse: separate; border-spacing: 0; table-layout: fixed; }
th, td { padding: 0 0 0 1px; border-right: 1px solid #a4b2ba; border-bottom: 1px solid #a4b2ba; text-align: left; font-weight: normal; white-space: nowrap; overflow: hidden; line-height: 11px; }
th { background: #f0e0ac; border-color: #605b48; }
.c2 { width: 2px; }
.c8 { width: 8px; }
.c12 { width: 12px; }
.c13 { width: 13px; }
.c17 { width: 17px; }
.c19 { width: 19px; }
.c20 { width: 20px; }
.c21 { width: 21px; }
.c22 { width: 22px; }
.c24 { width: 24px; }
.c26 { width: 26px; }
.c27 { width: 27px; }
.c28 { width: 28px; }
.c32 { width: 32px; }
.c39 { width: 39px; }
.c43 { width: 43px; }
.c50 { width: 50px; }
.c55 { width: 55px; }
.c56 { width: 56px; }
.c61 { width: 61px; }
.c69 { width: 69px; }
.c70 { width: 70px; }
.c71 { width: 71px; }
.c73 { width: 73px; }
.c75 { width: 75px; }
.c82 { width: 82px; }
.c83 { width: 83px; }
.c89 { width: 89px; }
.c97 { width: 97px; }
.reltab { position: relative; width: 140px; }
.reltab td { background: #f2fcfd; }
td.hot, .reltab td.hot { background: #ffca36; }
.warn { width: 8px; height: 7px; margin: auto; }

.items { margin-top: 4px; }
.itembox { display: grid; grid-template-columns: 1fr 12px; margin-top: 14px; border: 1px solid #b7c9d7; border-top-width: 2px; background: #edf1f4; padding-right: 0; }
.itab { width: 100%; }
.itab th { height: 14px; }
.itab td { height: 14px; line-height: 12px; background: #dae6f1; }
.itab td:first-child { border-color: #7ba2bc; }
.itab .rs { background: #f0e0ac; border: 1px solid #77705a; }
.itab .selh { padding: 0; }
.selh .ic { width: 11px; height: 11px; }
.itab td:nth-child(9), .itab td:nth-child(10) { padding-left: 0; }
.itab a, .hist-tab a { color: inherit; }
.vs { display: flex; flex-direction: column; align-items: center; gap: 1px; }
.ar { width: 10px; height: 10px; border: 1px solid #67869c; background: #fff; color: #111; font-size: 9px; line-height: 7px; text-align: center; flex: none; }
.colbtn { border: 0; background: none; height: 13px; }
.track { background: #93afc1; border: 1px solid #67899f; flex: 1; }
.track i { display: block; background: #fff; }
.vs .track { width: 10px; }
.vs .track i { height: 11px; }
.hs { display: flex; gap: 2px; align-items: center; }
.hs .track { height: 10px; }
.hs .track i { height: 8px; width: 14px; }
.h1 { padding: 1px 14px 1px 64px; height: 12px; grid-column: 1 / 3; }
.h1 .track { margin: 0 2px; }
.tools { display: flex; }
.tools > div { display: flex; }
.it { gap: 5px; margin-top: 3px; }
.it .sq { height: 15px; }
.it .far { margin-left: 23px; }
.it .addl { width: 83px; height: 15px; margin: 0 202px 0 auto; }

.itemrow { display: flex; align-items: center; height: 14px; margin-top: 15px; }
.itemrow .btn { width: 14px; }
.itemrow label { width: 63px; padding-left: 3px; }
.item { width: 190px; margin: 0 15px 0 2px; }
.pick.item select { background: #fff; }

.detail { margin: 3px 0 0 14px; }
.p2 { padding: 13px 0 10px 4px; height: 230px; }
.alv { width: 690px; height: 204px; border: 1px solid #a8b7c2; }
.at { gap: 7px; height: 17px; }
.at .sq { width: 17px; }
.at .split { width: 25px; gap: 2px; }
.alvbody { display: flex; gap: 3px; height: 171px; }
.clip { height: 171px; overflow: hidden; }
.hist-tab { width: 675px; height: 177px; }
.hist-tab th { height: 12px; line-height: 10px; }
.hist-tab td { background: #eefafc; line-height: 11px; }
.hist-tab td:nth-child(-n+5) { background: #9ccbea; border-color: #8fb8d2; }
.hist-tab td.hot { background: #ffca36; }
.hist-tab th:last-child, .hist-tab td:last-child { padding: 0; }
.sorted { float: right; width: 4px; height: 4px; }
.hist-tab th i { float: left; font: 5px/10px "DejaVu Sans", sans-serif; }
.hist-tab th:nth-child(6), .hist-tab th:nth-child(9), .hist-tab th:nth-child(11), .hist-tab th:nth-child(14) { text-align: right; padding-right: 1px; }
.hist-tab td:nth-child(4), .hist-tab tr:not(.sum) td:nth-child(6), .hist-tab td:nth-child(7), .hist-tab tr:not(.sum) td:nth-child(9), .hist-tab tr:not(.sum) td:nth-child(11), .hist-tab td:nth-child(12), .hist-tab tr:not(.sum) td:nth-child(14) { text-align: right; padding-right: 5px; }
.hist-tab tr:not(.sum) td:nth-child(4) { padding-right: 2px; }
.hist-tab tr:not(.sum) td:nth-child(2) { padding-left: 2px; }
.hist-tab tr.sum td { background: #fdfbae; border-right-color: transparent; font-weight: bold; text-align: left; padding-right: 0; border-bottom-color: #c9c791; }
.hist-tab tr.sum td.r { text-align: right; padding-right: 5px; }
.sum i { float: left; width: 3px; height: 3px; margin: 4px 0 0 2px; background: #83801c; }
.v2 { height: 158px; margin-top: 12px; gap: 2px; }
.v2 .track i { height: 42px; }
.h2 { padding: 0 16px 0 206px; height: 14px; }
.h2 .track i { width: 82%; }

.status { display: flex; align-items: center; height: 14px; margin: auto 4px 4px 5px; border: 1px solid #819fb7; background: #dae6f0; }
.msg { flex: 1; }
.sarrow { width: 6px; height: 9px; margin-right: 4px; }
.entry { width: 9px; height: 9px; }
.status span { display: flex; align-items: center; gap: 4px; height: 12px; padding: 0 4px; border-left: 1px solid #91aabd; }
.status .s14 { width: 14px; }
.status .s24 { width: 24px; }

.taskbar { display: flex; height: 26px; background: linear-gradient(90deg, #1e363e, #1e333f 60%, #16243d 80%); color: #f3f5f6; font: 9px/12px Roboto, "Noto Sans", sans-serif; }
.taskbar button { border: 0; background: none; display: flex; align-items: center; justify-content: center; }
.start { width: 32px; }
.start svg { width: 13px; height: 13px; }
.search { display: flex; align-items: center; gap: 7px; flex: none; width: 229px; padding-left: 7px; background: #f2f2f2; }
.search svg { width: 12px; height: 12px; }
.search input { flex: 1; min-width: 0; border: 0; background: none; font: 10px/14px Roboto, "Noto Sans", sans-serif; }
.search input::placeholder { color: #333; opacity: 1; }
.apps { display: flex; width: 491px; }
.apps button { flex: 1; }
.apps svg { width: 16px; height: 16px; }
.apps .run { box-shadow: 0 -2px #76b4e4 inset; }
.apps .cur { background: #4b626b; box-shadow: 0 -2px #76b4e4 inset; }
.tray { display: flex; align-items: center; gap: 4px; margin-left: auto; padding-right: 8px; white-space: nowrap; }
.tray > svg, .note svg { width: 12px; height: 12px; }
.tray .temp { margin: 0 4px; }
.clock { display: flex; flex-direction: column; align-items: center; width: 48px; font: 8px/12px "Liberation Sans", sans-serif; }
.note { position: relative; padding: 0 6px 0 3px; }
.note b { position: absolute; left: 8px; top: 4px; width: 12px; height: 10px; border-radius: 5px; background: #46515f; font: 7px/10px "Noto Sans", sans-serif; text-align: center; }

.dialog { position: absolute; left: 7px; top: 104px; width: 202px; height: 133px; display: flex; flex-direction: column; background: #f1f1f1; border: 1px solid #245a88; border-bottom-width: 2px; }
.dtitle { position: relative; display: flex; align-items: center; height: 13px; padding-left: 2px; gap: 1px; background: #fff; border-bottom: 1px solid #e1a33a; border-left: 2px solid #164470; }
.dtitle .ic { width: 10px; height: 10px; }
.dtitle span { flex: 1; }
.dclose { width: 8px; height: 8px; border: 1px solid #6c93b5; background: #edf5fb; margin-right: 1px; }
.dclose svg { width: 6px; height: 6px; }
.cut { width: 11px; height: 13px; }
.dbody { flex: 1; padding: 5px 4px 0 3px; }
.dfield { display: flex; align-items: center; margin-bottom: 16px; }
.dfield label { width: 97px; border-bottom: 1px solid #bbb; line-height: 13px; }
.dfield input { width: 52px; height: 13px; padding: 0 1px; border: 1px solid #8d9679; background: #9db4d8; }
.srch { width: 12px; height: 13px; border: 1px solid #666; border-radius: 0 6px 6px 0; background: #ddd; }
.srch svg { width: 10px; height: 11px; }
.radio { display: flex; align-items: center; gap: 2px; height: 15px; }
.radio input { appearance: none; width: 9px; height: 9px; border: 1px solid #333; border-radius: 5px; background: #fff; }
.radio input:checked { background: radial-gradient(#111 0 2px, #fff 3px); }
.dfoot { display: flex; align-items: center; gap: 3px; height: 19px; padding: 0 0 0 6px; background: #a1bfe0; }
.cursor { position: absolute; left: 141px; top: 4px; width: 9px; height: 14px; }
```
